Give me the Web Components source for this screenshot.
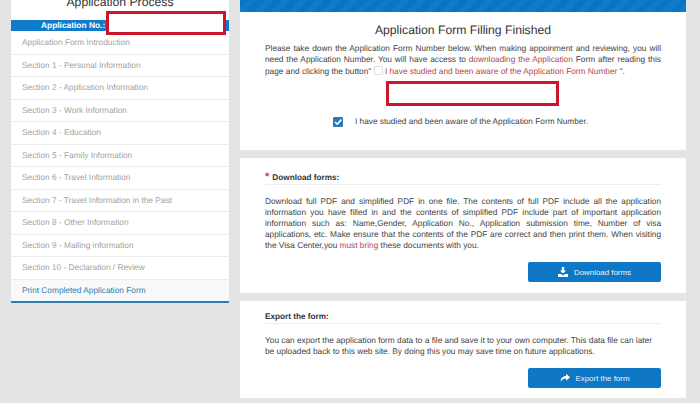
<!DOCTYPE html>
<html>
<head>
<meta charset="utf-8">
<style>
  html, body { margin: 0; padding: 0; height: 403px; overflow: hidden; background: #e4e4e4; }
  body { font-family: "Liberation Sans", Arial, sans-serif; text-rendering: geometricPrecision; }
</style>
</head>
<body>
<form-page>
  <side-nav slot="side">
    <nav-item>Application Form Introduction</nav-item>
    <nav-item>Section 1 - Personal Information</nav-item>
    <nav-item>Section 2 - Application Information</nav-item>
    <nav-item>Section 3 - Work Information</nav-item>
    <nav-item>Section 4 - Education</nav-item>
    <nav-item>Section 5 - Family Information</nav-item>
    <nav-item>Section 6 - Travel Information</nav-item>
    <nav-item>Section 7 - Travel Information in the Past</nav-item>
    <nav-item>Section 8 - Other Information</nav-item>
    <nav-item>Section 9 - Mailing information</nav-item>
    <nav-item>Section 10 - Declaration / Review</nav-item>
    <nav-item current>Print Completed Application Form</nav-item>
  </side-nav>
  <finish-card></finish-card>
  <action-card heading="Download forms:" required label="Download forms" icon="download" height="135">
    <p style="margin:0">Download full PDF and simplified PDF in one file. The contents of full PDF include all the application information you have filled in and the contents of simplified PDF include part of important application information such as: Name,Gender, Application No., Application submission time, Number of visa applications, etc. Make ensure that the contents of the PDF are correct and then print them. When visiting the Visa Center,you <span style="color:#b5484f">must bring</span> these documents with you.</p>
  </action-card>
  <action-card heading="Export the form:" label="Export the form" icon="share" height="97" compact>
    <p style="margin:0;text-align:left">You can export the application form data to a file and save it to your own computer. This data file can later be uploaded back to this web site. By doing this you may save time on future applications.</p>
  </action-card>
</form-page>

<script>
// ページ全体のレイアウト
class FormPage extends HTMLElement {
  constructor() {
    super();
    const shadow = this.attachShadow({ mode: 'open' });
    shadow.innerHTML = `
      <style>
        :host {
          display: flex;
          align-items: flex-start;
          gap: 11px;
          padding-left: 11px;
          color: #333;
        }
        .side { display: block; width: 218px; flex: none; }
        .main {
          width: 446px;
          flex: none;
          display: flex;
          flex-direction: column;
          gap: 8px;
        }
      </style>
      <div class="side"><slot name="side"></slot></div>
      <div class="main"><slot></slot></div>
    `;
  }
}

// 左側のメニュー
class SideNav extends HTMLElement {
  constructor() {
    super();
    const shadow = this.attachShadow({ mode: 'open' });
    shadow.innerHTML = `
      <style>
        :host {
          display: block;
          position: relative;
          background: #fff;
          border-bottom: 2px solid #2f7fb5;
          margin-top: -6px;
        }
        h2 {
          margin: 0;
          height: 26px;
          font-size: 12.2px;
          font-weight: normal;
          line-height: 16px;
          text-align: center;
          color: #333;
        }
        .app-no {
          height: 11px;
          line-height: 11px;
          margin-bottom: 1px;
          background: #0f7cc9;
          color: #fff;
          font-size: 8.4px;
          font-weight: bold;
          padding-left: 30px;
        }
        .mask {
          position: absolute;
          left: 95px;
          top: 17px;
          width: 120px;
          height: 24px;
          box-sizing: border-box;
          border: 3px solid #cd1529;
          background: #fff;
        }
      </style>
      <h2>Application Process</h2>
      <div class="app-no">Application No.:</div>
      <div class="mask"></div>
      <slot></slot>
    `;
  }
}

class NavItem extends HTMLElement {
  constructor() {
    super();
    const shadow = this.attachShadow({ mode: 'open' });
    shadow.innerHTML = `
      <style>
        :host {
          display: block;
          box-sizing: border-box;
          height: 22.5px;
          line-height: 21.5px;
          padding-left: 11px;
          font-size: 8.3px;
          color: #a3a3a3;
          border-bottom: 1px solid #ececec;
        }
        :host([current]) {
          color: #2f7fb0;
          background: #f7f9fb;
          border-bottom: none;
          height: 21.5px;
        }
      </style>
      <slot></slot>
    `;
  }
}

// 記入完了カード
class FinishCard extends HTMLElement {
  constructor() {
    super();
    const shadow = this.attachShadow({ mode: 'open' });
    shadow.innerHTML = `
      <style>
        :host {
          display: block;
          position: relative;
          height: 150px;
          box-sizing: border-box;
          background: #fff;
          font-size: 8.3px;
          line-height: 11.3px;
        }
        .stripe {
          height: 12px;
          background: repeating-linear-gradient(135deg, #0b74c2 0 6px, #0f7cc9 6px 12px);
        }
        h2 {
          margin: 10px 0 5px;
          font-size: 12.2px;
          line-height: 16px;
          font-weight: normal;
          text-align: center;
          color: #333;
        }
        p {
          margin: 0 25px;
          text-align: justify;
          color: #444;
        }
        .red { color: #b5484f; }
        .box {
          display: inline-block;
          width: 7px;
          height: 7px;
          border: 1px solid #ddd;
          border-radius: 1px;
          vertical-align: -1px;
        }
        .mask {
          position: absolute;
          left: 146px;
          top: 81px;
          width: 173px;
          height: 25px;
          box-sizing: border-box;
          border: 3px solid #cd1529;
          background: #fff;
        }
        .agree {
          position: absolute;
          left: 93px;
          top: 116px;
          display: flex;
          align-items: center;
          gap: 12px;
          color: #444;
          font-size: 8.25px;
        }
        svg { display: block; }
      </style>
      <div class="stripe"></div>
      <h2>Application Form Filling Finished</h2>
      <p>Please take down the Application Form Number below. When making appoinment and reviewing, you will need the Application Number. You will have access to <span class="red">downloading the Application</span> Form after reading this page and clicking the button" <span class="box"></span> <span class="red">I have studied and been aware of the Application Form Number</span> ".</p>
      <div class="mask"></div>
      <div class="agree">
        <svg width="10" height="10" viewBox="0 0 10 10">
          <rect width="10" height="10" rx="1.2" fill="#2f78b5"/>
          <path d="M2 5l2.2 2.2L8.4 2.6" fill="none" stroke="#fff" stroke-width="1.6"/>
        </svg>
        <span>I have studied and been aware of the Application Form Number.</span>
      </div>
    `;
  }
}

const ICONS = {
  download: '<path d="M5 0h3v4.5h2.4L6.5 8.6 2.6 4.5H5zM0 9.2h3.6L6.5 11l2.9-1.8H13V13H0z" fill="#fff"/>',
  share: '<path d="M8 1l5 4.5L8 10V7.2C5 7.2 2.4 8 .8 11.5.8 7 3.4 3.8 8 3.8z" fill="#fff"/>'
};

// 見出し・本文・ボタンのカード
class ActionCard extends HTMLElement {
  constructor() {
    super();
    const shadow = this.attachShadow({ mode: 'open' });
    shadow.innerHTML = `
      <style>
        :host {
          display: block;
          box-sizing: border-box;
          background: #fff;
          padding: 10px 25px 0;
          font-size: 8.3px;
          line-height: 11px;
          color: #444;
        }
        :host([compact]) { padding-top: 6px; }
        .head {
          font-weight: bold;
          color: #333;
          height: 16px;
          line-height: 19px;
          border-bottom: 1px solid #eee;
          margin-bottom: 11px;
          font-size: 8.2px;
        }
        .star { color: #b5484f; font-size: 11px; margin-right: 0; }
        .body { text-align: justify; }
        .foot {
          display: flex;
          justify-content: flex-end;
          margin-top: 11px;
        }
        button {
          width: 133px;
          height: 20px;
          border: none;
          border-radius: 2px;
          background: #0f78c6;
          color: #e8f2fa;
          font: 7.9px "Liberation Sans", Arial, sans-serif;
          display: flex;
          align-items: center;
          justify-content: center;
          gap: 6px;
          padding: 0;
        }
      </style>
      <div class="head"></div>
      <div class="body"><slot></slot></div>
      <div class="foot"><button type="button"><svg width="10" height="10" viewBox="0 0 13 13"></svg><span></span></button></div>
    `;
  }

  connectedCallback() {
    const shadow = this.shadowRoot;
    this.style.height = this.getAttribute('height') + 'px';
    const head = shadow.querySelector('.head');
    head.textContent = this.getAttribute('heading');
    if (this.hasAttribute('required')) {
      const star = document.createElement('span');
      star.className = 'star';
      star.textContent = '* ';
      head.prepend(star);
    }
    shadow.querySelector('button span').textContent = this.getAttribute('label');
    shadow.querySelector('svg').innerHTML = ICONS[this.getAttribute('icon')];
  }
}

customElements.define('form-page', FormPage);
customElements.define('side-nav', SideNav);
customElements.define('nav-item', NavItem);
customElements.define('finish-card', FinishCard);
customElements.define('action-card', ActionCard);
</script>
</body>
</html>
